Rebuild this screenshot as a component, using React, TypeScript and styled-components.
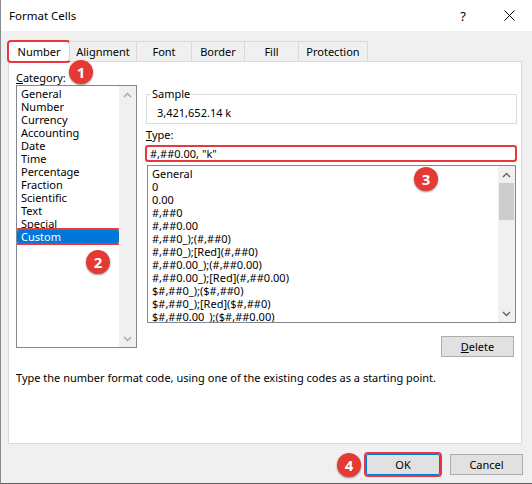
import styled, { createGlobalStyle } from "styled-components";

const GlobalStyle = createGlobalStyle`
  html, body {
    margin: 0;
    padding: 0;
    background: #f0f0f0;
  }
  body {
    font-family: "Segoe UI", "Noto Sans", sans-serif;
    font-size: 11px;
    color: #000;
  }
`;

const RED = "#e8383d";

const Window = styled.div`
  position: relative;
  width: 532px;
  height: 484px;
  box-sizing: border-box;
  border-left: 1px solid #8a8a8a;
  border-bottom: 1px solid #5f5f5f;
  background: #f0f0f0;
  display: flex;
  flex-direction: column;
`;

const TitleBar = styled.div`
  height: 31px;
  background: #fff;
  display: flex;
  align-items: center;
  padding-left: 8px;
`;

const TitleText = styled.div`
  flex: 1;
  font-size: 11.5px;
`;

const TitleButton = styled.div`
  width: 46px;
  height: 31px;
  display: flex;
  align-items: center;
  justify-content: center;
  font-size: 13px;
`;

const Body = styled.div`
  padding: 10px 0 0 7px;
`;

const TabRow = styled.div`
  display: flex;
  height: 20px;
  position: relative;
  z-index: 1;
`;

const Tab = styled.div<{ w: number; active?: boolean }>`
  width: ${p => p.w}px;
  height: ${p => (p.active ? 21 : 20)}px;
  box-sizing: border-box;
  border: 1px solid #d9d9d9;
  border-bottom: none;
  margin-left: -1px;
  &:first-child {
    margin-left: 0;
  }
  background: ${p => (p.active ? "#fff" : "#f0f0f0")};
  display: flex;
  align-items: center;
  justify-content: center;
  line-height: 14px;
  outline: ${p => (p.active ? `2.5px solid ${RED}` : "none")};
  outline-offset: -1px;
  border-radius: ${p => (p.active ? "3px" : "0")};
`;

const Panel = styled.div`
  width: 514px;
  height: 383px;
  box-sizing: border-box;
  border: 1px solid #d9d9d9;
  background: #fff;
  padding: 9px 4px 0 7px;
  display: flex;
  flex-direction: column;
`;

const Columns = styled.div`
  display: grid;
  grid-template-columns: 121px 1fr;
  column-gap: 9px;
`;

const Column = styled.div`
  display: flex;
  flex-direction: column;
`;

const Label = styled.div`
  line-height: 14px;
  height: 14px;
`;

const ListBox = styled.div<{ h: number }>`
  height: ${p => p.h}px;
  box-sizing: border-box;
  border: 1px solid #828790;
  display: flex;
  overflow: hidden;
`;

const Items = styled.div`
  flex: 1;
  padding-top: 1px;
  overflow: hidden;
`;

const Item = styled.div<{ selected?: boolean }>`
  height: 13px;
  line-height: 13px;
  padding-left: 4px;
  white-space: nowrap;
  background: ${p => (p.selected ? "#0078d7" : "transparent")};
  color: ${p => (p.selected ? "#fff" : "#000")};
  outline: ${p => (p.selected ? `2.5px solid ${RED}` : "none")};
  outline-offset: 0px;
  border-radius: ${p => (p.selected ? "2px" : "0")};
  position: relative;
`;

const ScrollBar = styled.div`
  width: 17px;
  background: #f0f0f0;
  display: flex;
  flex-direction: column;
`;

const Arrow = styled.div`
  height: 17px;
  display: flex;
  align-items: center;
  justify-content: center;
`;

const Track = styled.div`
  flex: 1;
`;

const Thumb = styled.div`
  height: 37px;
  background: #cdcdcd;
  margin: 0 1px;
`;

const Sample = styled.fieldset`
  margin: 16px 0 0 0;
  padding: 0 0 3px 10px;
  border: 1px solid #dcdcdc;
  min-width: 0;
`;

const Legend = styled.legend`
  padding: 0 1px;
  margin-left: -6px;
  line-height: 14px;
`;

const SampleValue = styled.div`
  margin-top: 5px;
  line-height: 14px;
`;

const TypeLabel = styled(Label)`
  margin-top: 4px;
`;

const TypeInput = styled.div`
  margin: 4px 1px 0 0;
  height: 15px;
  box-sizing: border-box;
  border: 1px solid #7a7a7a;
  padding-left: 3px;
  line-height: 13px;
  outline: 2.5px solid ${RED};
  outline-offset: -1px;
  border-radius: 2px;
`;

const FormatList = styled(ListBox)`
  margin: 4px 1px 0 1px;
`;

const DeleteRow = styled.div`
  display: flex;
  justify-content: flex-end;
  margin: 13px 3px 0 0;
`;

const Button = styled.button<{ w: number; marked?: boolean }>`
  width: ${p => p.w}px;
  height: 21px;
  box-sizing: border-box;
  background: #e1e1e1;
  border: 1px solid ${p => (p.marked ? "#0078d7" : "#adadad")};
  font: inherit;
  font-size: 11px;
  color: #000;
  padding: 0;
  outline: ${p => (p.marked ? `2.5px solid ${RED}` : "none")};
  outline-offset: 0px;
  border-radius: ${p => (p.marked ? "2px" : "0")};
`;

const HelpText = styled.div`
  margin-top: 14px;
  line-height: 14px;
`;

const Footer = styled.div`
  display: flex;
  justify-content: flex-end;
  gap: 10px;
  margin-top: 10px;
  padding-right: 9px;
`;

const Badge = styled.div<{ x: number; y: number }>`
  position: absolute;
  left: ${p => p.x - 12}px;
  top: ${p => p.y - 12}px;
  width: 24px;
  height: 24px;
  border-radius: 50%;
  background: #e53935;
  color: #fff;
  font-family: "Noto Sans", sans-serif;
  font-weight: bold;
  font-size: 15px;
  display: flex;
  align-items: center;
  justify-content: center;
  box-shadow: 0 1px 2px rgba(0, 0, 0, 0.45);
  z-index: 5;
`;

const categories = [
  "General", "Number", "Currency", "Accounting", "Date", "Time",
  "Percentage", "Fraction", "Scientific", "Text", "Special", "Custom",
];

const formats = [
  "General", "0", "0.00", "#,##0", "#,##0.00", "#,##0_);(#,##0)",
  "#,##0_);[Red](#,##0)", "#,##0.00_);(#,##0.00)", "#,##0.00_);[Red](#,##0.00)",
  "$#,##0_);($#,##0)", "$#,##0_);[Red]($#,##0)", "$#,##0.00_);($#,##0.00)",
];

const tabs = [
  { label: "Number", w: 62 },
  { label: "Alignment", w: 68 },
  { label: "Font", w: 56 },
  { label: "Border", w: 54 },
  { label: "Fill", w: 55 },
  { label: "Protection", w: 70 },
];

function Chevron({ up, color }: { up?: boolean; color: string }) {
  return (
    <svg width="9" height="6" viewBox="0 0 9 6">
      <polyline
        points={up ? "1,5 4.5,1.5 8,5" : "1,1 4.5,4.5 8,1"}
        fill="none"
        stroke={color}
        strokeWidth="1.4"
      />
    </svg>
  );
}

function Scroll({ thumb, color }: { thumb?: boolean; color: string }) {
  return (
    <ScrollBar>
      <Arrow><Chevron up color={color} /></Arrow>
      <Track>{thumb && <Thumb />}</Track>
      <Arrow><Chevron color={color} /></Arrow>
    </ScrollBar>
  );
}

export default function App() {
  return (
    <>
      <GlobalStyle />
      <Window>
        <TitleBar>
          <TitleText>Format Cells</TitleText>
          <TitleButton>?</TitleButton>
          <TitleButton>
            <svg width="11" height="11" viewBox="0 0 11 11">
              <path d="M0.5 0.5 L10.5 10.5 M10.5 0.5 L0.5 10.5" stroke="#000" strokeWidth="1" />
            </svg>
          </TitleButton>
        </TitleBar>
        <Body>
          <TabRow>
            {tabs.map((t, i) => (
              <Tab key={`tab-${i}`} w={t.w} active={i === 0}>{t.label}</Tab>
            ))}
          </TabRow>
          <Panel>
            <Columns>
              <Column>
                <Label><u>C</u>ategory:</Label>
                <ListBox h={263}>
                  <Items>
                    {categories.map((c, i) => (
                      <Item key={`cat-${i}`} selected={c === "Custom"}>{c}</Item>
                    ))}
                  </Items>
                  <Scroll color="#a6a6a6" />
                </ListBox>
              </Column>
              <Column>
                <Sample>
                  <Legend>Sample</Legend>
                  <SampleValue>3,421,652.14 k</SampleValue>
                </Sample>
                <TypeLabel><u>T</u>ype:</TypeLabel>
                <TypeInput>#,##0.00, "k"</TypeInput>
                <FormatList h={158}>
                  <Items>
                    {formats.map((f, i) => (
                      <Item key={`fmt-${i}`}>{f}</Item>
                    ))}
                  </Items>
                  <Scroll thumb color="#606060" />
                </FormatList>
                <DeleteRow>
                  <Button w={73}><u>D</u>elete</Button>
                </DeleteRow>
              </Column>
            </Columns>
            <HelpText>Type the number format code, using one of the existing codes as a starting point.</HelpText>
          </Panel>
          <Footer>
            <Button w={74} marked>OK</Button>
            <Button w={73}>Cancel</Button>
          </Footer>
        </Body>
        <Badge x={80} y={72}>1</Badge>
        <Badge x={97} y={262}>2</Badge>
        <Badge x={425} y={179}>3</Badge>
        <Badge x={348} y={465}>4</Badge>
      </Window>
    </>
  );
}
